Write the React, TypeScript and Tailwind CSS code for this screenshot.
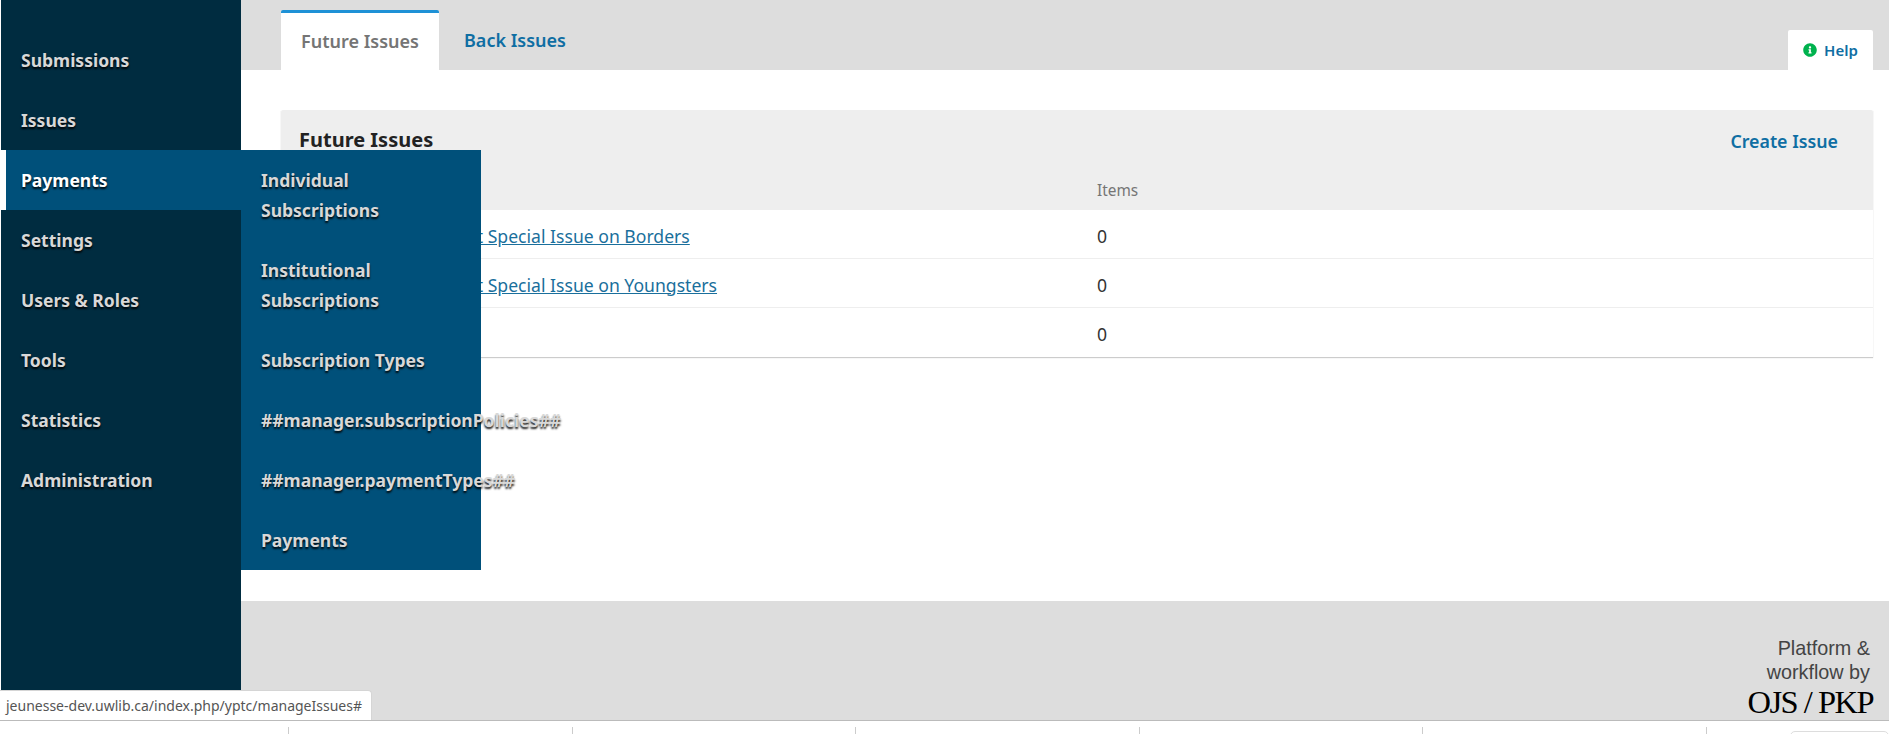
import { FaInfoCircle } from "react-icons/fa";

const navItems = ["Submissions", "Issues", "Payments", "Settings", "Users & Roles", "Tools", "Statistics", "Administration"];
const subItems = [
    "Individual Subscriptions",
    "Institutional Subscriptions",
    "Subscription Types",
    "##manager.subscriptionPolicies##",
    "##manager.paymentTypes##",
    "Payments",
];
const issues = [
    "Vol. 1 No 2 2020: Draft Special Issue on Borders",
    "Vol. 1 No 3 2021: Draft Special Issue on Youngsters",
    "Vol. 1 No 4 2021",
];
const ticks = [0, 1, 2, 3, 4, 5];

export default function App() {
    return (
        <div className="relative flex h-[734px] flex-col overflow-hidden bg-white font-['Noto_Sans',sans-serif] text-[14px] text-[#222]">
            <div className="flex h-[720px] shrink-0 pl-px">
                <nav className="relative w-[240px] shrink-0 bg-[#002c40] pt-[30px] text-[17.5px] font-bold leading-[30px] text-[#d8d8d8] [text-shadow:0_2px_2px_rgba(0,0,0,0.9)]">
                    {navItems.map(item => (
                        item === "Payments"
                            ? <div key={item} className="-ml-px h-[60px] border-l-[6px] border-white bg-[#00507a] py-[15px] pl-[15px] text-white">{item}</div>
                            : <div key={item} className="h-[60px] py-[15px] pl-5">{item}</div>
                    ))}
                    <div className="absolute left-[240px] top-[150px] w-[240px] bg-[#00507a]">
                        {subItems.map(item => (
                            <div key={item} className="px-5 py-[15px]">{item}</div>
                        ))}
                    </div>
                </nav>
                <div className="flex min-w-0 flex-1 flex-col">
                    <div className="flex h-[70px] shrink-0 items-end justify-between bg-[#ddd] pl-[40px] pr-4">
                        <div className="flex items-end text-[18px] font-semibold">
                            <div className="flex h-[60px] w-[158px] items-center justify-center rounded-t-[2px] border-t-[3px] border-[#1e91d6] bg-white text-[#757575]">Future Issues</div>
                            <div className="flex h-[60px] items-center pl-[25px] text-[#0f6ea3]">Back Issues</div>
                        </div>
                        <div className="flex h-10 w-[85px] items-center justify-center gap-[7px] rounded-t-[2px] bg-white text-[15px] font-semibold text-[#0f6ea3]">
                            <FaInfoCircle className="text-[14px] text-[#00b24e]" />
                            Help
                        </div>
                    </div>
                    <div className="h-[531px] shrink-0 px-4 pl-[40px] pt-10">
                        <div className="shadow-[0_1px_1px_rgba(0,0,0,0.2)]">
                            <div className="h-[100px] rounded-t-[2px] bg-[#eee]">
                                <div className="flex items-center justify-between pl-[18px] pr-[35px] pt-[17px]">
                                    <div className="text-[20px] font-bold leading-[24px]">Future Issues</div>
                                    <div className="pt-[2px] text-[17.8px] font-semibold leading-[24px] text-[#0f6ea3]">Create Issue</div>
                                </div>
                                <div className="pl-[816px] pt-[28px] text-[15.4px] leading-[20px] text-[#757575]">Items</div>
                            </div>
                            {issues.map((issue, i) => (
                                <div key={issue} className={"flex h-[49px] items-center bg-white pt-1 text-[17.6px] " + (i < 2 ? "border-b border-[#eee]" : "")}>
                                    <a href="#" className="w-[816px] shrink-0 pl-[18px] text-[#1a6f9c] underline">{issue}</a>
                                    <span className="text-[#333]">0</span>
                                </div>
                            ))}
                        </div>
                    </div>
                    <div className="flex h-[119px] flex-col items-end justify-end bg-[#ddd] pr-4">
                        <div className="pr-[3px] text-right font-['Liberation_Sans',sans-serif] text-[19.8px] leading-[24px] text-[#444]">
                            Platform &amp;<br />workflow by
                        </div>
                        <div className="font-['Liberation_Serif',serif] text-[32.5px] leading-[36px] tracking-[-1.5px] text-black">OJS / PKP</div>
                    </div>
                </div>
            </div>
            <div className="relative flex-1 border-t border-[#bbb] bg-white">
                {ticks.map(t => (
                    <span key={t} className="float-left ml-[282.5px] mt-[6px] h-2 w-0 border-l border-[#ccc] first:ml-[288px]" />
                ))}
                <span className="absolute right-0 top-[10px] h-6 w-[99px] rounded-t-[5px] border border-[#ddd]" />
            </div>
            <div className="absolute bottom-[14px] left-0 h-[30px] w-[372px] rounded-tr-[4px] border-r border-t border-[#d5d5d5] bg-white pl-[6px] text-[14px] leading-[30px] text-[#555]">
                jeunesse-dev.uwlib.ca/index.php/yptc/manageIssues#
            </div>
        </div>
    );
}
